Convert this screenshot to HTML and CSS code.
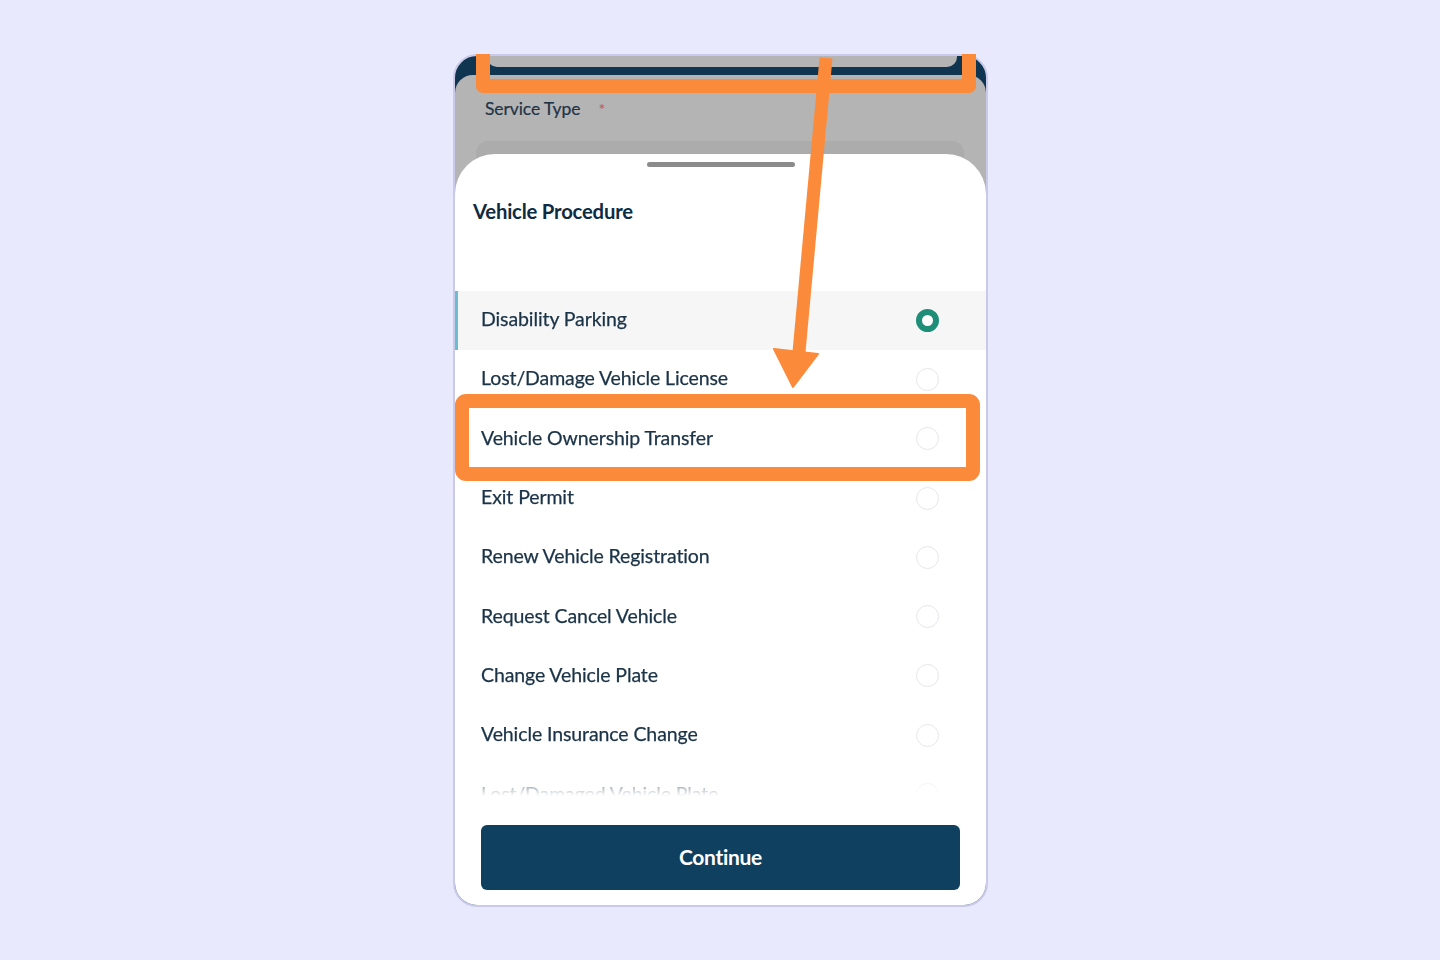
FILE: index.html
```html
<!DOCTYPE html>
<html lang="en">
<head>
<meta charset="utf-8">
<title>Vehicle Procedure</title>
<link rel="stylesheet" href="styles.css">
</head>
<body>
<div class="stage">
  <div class="phone">
    <div class="dim">
      <div class="header">
        <div class="header-cut"></div>
      </div>
      <div class="dim-body">
        <div class="field-label">Service Type <span class="req">*</span></div>
        <div class="field-box"></div>
      </div>
    </div>
    <div class="sheet">
      <div class="handle"></div>
      <h2 class="sheet-title">Vehicle Procedure</h2>
      <ul class="options">
        <li class="option selected"><span class="opt-text">Disability Parking</span><span class="radio on"></span></li>
        <li class="option"><span class="opt-text">Lost/Damage Vehicle License</span><span class="radio"></span></li>
        <li class="option"><span class="opt-text">Vehicle Ownership Transfer</span><span class="radio"></span></li>
        <li class="option"><span class="opt-text">Exit Permit</span><span class="radio"></span></li>
        <li class="option"><span class="opt-text">Renew Vehicle Registration</span><span class="radio"></span></li>
        <li class="option"><span class="opt-text">Request Cancel Vehicle</span><span class="radio"></span></li>
        <li class="option"><span class="opt-text">Change Vehicle Plate</span><span class="radio"></span></li>
        <li class="option"><span class="opt-text">Vehicle Insurance Change</span><span class="radio"></span></li>
        <li class="option"><span class="opt-text">Lost/Damaged Vehicle Plate</span><span class="radio"></span></li>
      </ul>
      <button class="continue">Continue</button>
    </div>
  </div>
  <svg class="annot" width="535" height="853" viewBox="0 0 535 853" aria-hidden="true">
    <path d="M30 0 V32 H516 V0" fill="none" stroke="#fb8b3a" stroke-width="14" stroke-linejoin="round"/>
    <path d="M373 4 L346 298" fill="none" stroke="#fb8b3a" stroke-width="13"/>
    <polygon points="321,295 365,300 340,333" fill="#fb8b3a" stroke="#fb8b3a" stroke-width="2" stroke-linejoin="round"/>
    <rect x="9" y="347" width="511" height="73" rx="4" fill="none" stroke="#fb8b3a" stroke-width="14"/>
  </svg>
</div>
</body>
</html>
```

FILE: styles.css
```css
* { box-sizing: border-box; }
html, body { margin: 0; padding: 0; }
body {
  width: 1440px;
  height: 960px;
  background: #e9e9fd;
  font-family: "Lato", "Noto Sans", sans-serif;
  display: flex;
  align-items: center;
  justify-content: center;
  overflow: hidden;
}
.stage {
  position: relative;
  width: 535px;
  height: 853px;
  margin-left: 1px;
}
.phone {
  width: 535px;
  height: 853px;
  border: 2px solid #c9c9e9;
  border-radius: 24px;
  overflow: hidden;
  background: #0f3550;
  display: flex;
  flex-direction: column;
}
.dim {
  height: 140px;
  flex: none;
  display: flex;
  flex-direction: column;
}
.header {
  height: 19px;
  display: flex;
  justify-content: center;
  flex: none;
}
.header-cut {
  width: 470px;
  height: 11px;
  margin-left: 2px;
  background: #b4b4b4;
  border-radius: 0 0 10px 10px;
}
.dim-body {
  flex: 1;
  background: #b4b4b4;
  border-radius: 18px 18px 0 0;
  display: flex;
  flex-direction: column;
}
.field-label {
  margin: 22px 0 0 30px;
  font-size: 17.5px;
  color: #1e3346;
  line-height: 24px;
  letter-spacing: -0.1px;
  -webkit-text-stroke: 0.2px currentColor;
}
.req {
  color: #c0625a;
  margin-left: 14px;
  font-size: 15px;
}
.field-box {
  margin: 20px 22px 0 21px;
  height: 40px;
  flex: none;
  background: #acacac;
  border-radius: 12px 12px 0 0;
}
.sheet {
  flex: 1;
  margin-top: -42px;
  background: #ffffff;
  border-radius: 40px 40px 0 0;
  display: flex;
  flex-direction: column;
  position: relative;
  z-index: 1;
}
.handle {
  width: 148px;
  height: 5px;
  background: #8b8b8b;
  border-radius: 3px;
  margin: 8px auto 0;
}
.sheet-title {
  margin: 32px 0 0 18px;
  font-size: 20.3px;
  font-weight: 700;
  color: #0e2b42;
  line-height: 24px;
  letter-spacing: -0.2px;
}
.options {
  list-style: none;
  margin: 68px 0 0;
  padding: 0;
  height: 505px;
  overflow: hidden;
  -webkit-mask-image: linear-gradient(to bottom, #000 calc(100% - 26px), transparent 100%);
  mask-image: linear-gradient(to bottom, #000 calc(100% - 26px), transparent 100%);
}
.option {
  height: 59.3px;
  display: flex;
  align-items: center;
  justify-content: space-between;
  padding: 0 47px 0 26px;
  font-size: 19.5px;
  color: #1b3347;
  letter-spacing: -0.1px;
  -webkit-text-stroke: 0.25px currentColor;
}
.option.selected {
  background: #f6f6f7;
  box-shadow: inset 3px 0 0 #6cbccd;
}
.opt-text { line-height: 24px; margin-top: -2px; }
.radio {
  width: 23px;
  height: 23px;
  border-radius: 50%;
  border: 1.5px solid #e5e5ec;
  flex: none;
}
.radio.on {
  border: 6px solid #1f8e78;
  background: #ffffff;
}
.continue {
  margin: 29px 26px 0 26px;
  height: 65px;
  border: none;
  border-radius: 6px;
  background: #0f4060;
  color: #ffffff;
  font-family: "Lato", "Noto Sans", sans-serif;
  font-size: 21px;
  font-weight: 700;
  letter-spacing: -0.3px;
  padding-bottom: 2px;
  flex: none;
}
.annot {
  position: absolute;
  left: 0;
  top: 0;
  z-index: 2;
  pointer-events: none;
}
```
